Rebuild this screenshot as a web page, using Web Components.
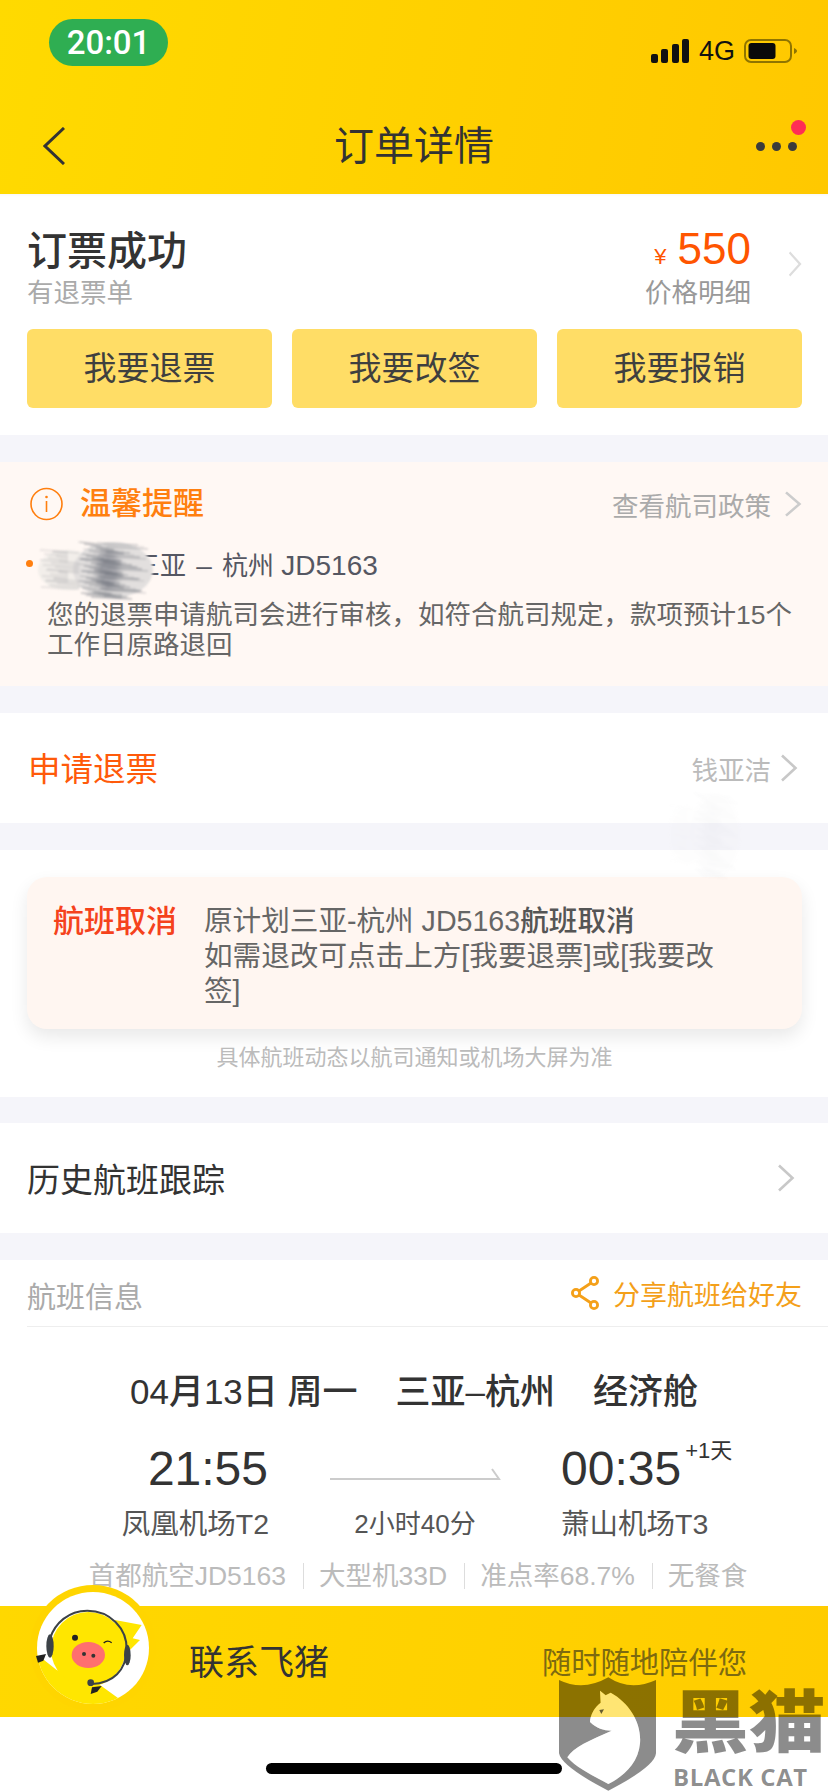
<!DOCTYPE html>
<html lang="zh-CN">
<head>
<meta charset="utf-8">
<title>订单详情</title>
<style>
  html, body { margin: 0; padding: 0; }
  body {
    position: relative;
    width: 828px;
    height: 1792px;
    overflow: hidden;
    background: #f5f5fa;
    font-family: "Liberation Sans", "Noto Sans CJK SC", sans-serif;
    color: #333;
  }
</style>
</head>
<body>
<app-header></app-header>
<order-summary></order-summary>
<tip-panel></tip-panel>
<action-row style="--label-color:#ff5a0a;--left:28px;--right:30px;--shift:4px;--label-size:32.5px;margin-top:27px">
  <span slot="label">申请退票</span>
  <span slot="value">钱亚洁</span>
</action-row>
<flight-status></flight-status>
<action-row style="margin-top:26px;--right:33px;--label-size:33px">
  <span slot="label">历史航班跟踪</span>
</action-row>
<flight-info></flight-info>
<contact-bar></contact-bar>
<ink-smudge style="left:38px;top:540px;width:120px;height:60px"></ink-smudge>
<ink-smudge style="left:668px;top:790px;width:76px;height:90px;opacity:.035"></ink-smudge>
<black-cat></black-cat>

<script>
function mount(el, html) {
  el.attachShadow({ mode: 'open' }).innerHTML = html;
}

class ChevronIcon extends HTMLElement {
  constructor() {
    super();
    mount(this, `
      <style>
        :host { display: block; width: var(--w, 18px); height: var(--h, 28px); color: var(--c, #ccc); }
        svg { display: block; width: 100%; height: 100%; }
      </style>
      <svg viewBox="0 0 18 28" preserveAspectRatio="none" fill="none">
        <path d="M2 1.5 L15.5 14 L2 26.5" stroke="currentColor" stroke-width="var(--sw, 2.6)"/>
      </svg>`);
  }
}

class AppHeader extends HTMLElement {
  constructor() {
    super();
    mount(this, `
      <style>
        :host { display: block; height: 194px; box-sizing: border-box; background: linear-gradient(100deg, #ffda00, #ffc800); }
        .status { display: flex; justify-content: space-between; align-items: flex-start; height: 66px; padding: 19px 31px 0 49px; box-sizing: border-box; }
        .pill { width: 119px; height: 47px; border-radius: 24px; background: #2fae52; color: #fff; font: 500 33px/47px Roboto, sans-serif; text-align: center; }
        .sys { display: flex; align-items: center; height: 24px; margin-top: 20px; gap: 10px; }
        .net { font-size: 27px; line-height: 24px; color: #111; margin-right: -1px; }
        .nav { display: grid; grid-template-columns: 1fr auto 1fr; align-items: center; height: 56px; margin-top: 52px; padding: 0 43px; }
        h1 { margin: 0; font-size: 40px; line-height: 56px; font-weight: 400; color: #333; }
        .dots { position: relative; justify-self: end; display: flex; gap: 7px; margin-right: -12px; }
        .dots i { width: 9px; height: 9px; border-radius: 50%; background: #3b3b3b; }
        .badge { position: absolute; right: -9px; top: -22px; width: 15px; height: 15px; border-radius: 50%; background: #ff2d55; }
      </style>
      <div class="status">
        <div class="pill">20:01</div>
        <div class="sys">
          <svg width="38" height="24" viewBox="0 0 38 24" fill="#111">
            <rect x="0" y="15" width="7" height="9" rx="2"/><rect x="10" y="10" width="7" height="14" rx="2"/>
            <rect x="21" y="5" width="7" height="19" rx="2"/><rect x="31" y="0" width="7" height="24" rx="2"/>
          </svg>
          <span class="net">4G</span>
          <svg width="53" height="24" viewBox="0 0 53 24">
            <rect x="1" y="1" width="46" height="22" rx="6" fill="none" stroke="#8f7400" stroke-width="2"/>
            <rect x="4.5" y="4" width="27" height="16" rx="3" fill="#0a0a0a"/>
            <path d="M50 9 C52 10 53 11 53 12 C53 13 52 14 50 15 Z" fill="#8f7400"/>
          </svg>
        </div>
      </div>
      <div class="nav">
        <svg width="22" height="38" viewBox="0 0 22 38" fill="none"><path d="M21 1 L2 19 L21 37" stroke="#333" stroke-width="3"/></svg>
        <h1>订单详情</h1>
        <div class="dots"><i></i><i></i><i></i><span class="badge"></span></div>
      </div>`);
  }
}

class OrderSummary extends HTMLElement {
  constructor() {
    super();
    mount(this, `
      <style>
        :host { display: block; background: #fff; padding: 37px 26px 27px 27px; height: 241px; box-sizing: border-box; box-shadow: inset 0 3px 3px -2px rgba(0,0,0,.04); }
        .top { display: flex; justify-content: space-between; height: 98px; }
        h2 { margin: 0; font-size: 40px; line-height: 40px; font-weight: 500; color: #333; }
        .sub { margin-top: 7px; font-size: 26.5px; line-height: 30px; color: #aaa; }
        .right { display: flex; gap: 37px; }
        .price { text-align: right; }
        .amount { margin-top: -2px; line-height: 40px; font-size: 44px; color: #ff5500; }
        .amount small { font-size: 22px; margin-right: 11px; }
        .label { margin-top: 1px; font-size: 26.5px; line-height: 30px; color: #999; }
        chevron-icon { margin-top: 20px; --w: 14px; --h: 26px; --c: #ddd; }
        .btns { display: grid; grid-template-columns: repeat(3, 1fr); gap: 20px; }
        .btns div { height: 79px; border-radius: 6px; background: #ffdd66; font-size: 33px; line-height: 79px; text-align: center; color: #3f3f3f; }
      </style>
      <div class="top">
        <div><h2>订票成功</h2><div class="sub">有退票单</div></div>
        <div class="right">
          <div class="price">
            <div class="amount"><small>¥</small>550</div>
            <div class="label">价格明细</div>
          </div>
          <chevron-icon></chevron-icon>
        </div>
      </div>
      <div class="btns"><div>我要退票</div><div>我要改签</div><div>我要报销</div></div>`);
  }
}

class TipPanel extends HTMLElement {
  constructor() {
    super();
    mount(this, `
      <style>
        :host { display: block; margin-top: 27px; height: 224px; box-sizing: border-box; padding: 24px 26px 0 30px; background: #fff8f4; }
        .head { display: flex; align-items: center; height: 36px; }
        .head svg { margin-right: 17px; }
        b { flex: 1; font-size: 31px; line-height: 38px; font-weight: 500; color: #ff7f0f; }
        .link { font-size: 26.5px; color: #aaa; margin-right: 13px; }
        chevron-icon { --w: 18px; --h: 26px; --c: #ccc; }
        .item { display: grid; grid-template-columns: 21px 1fr; margin: 29px 0 0 -4px; }
        .dot { width: 7px; height: 7px; margin-top: 9px; border-radius: 50%; background: #ff7f0f; }
        .route { padding-left: 87px; font-size: 26px; line-height: 30px; color: #555762; white-space: pre; }
        .route span { font-size: 28px; }
        .route .dash { margin: 0 3px; }
        .msg { grid-column: 2; margin-top: 19px; font-size: 26.5px; line-height: 30px; color: #666; width: 752px; }
      </style>
      <div class="head">
        <svg width="33" height="34" viewBox="0 0 33 34" fill="none">
          <circle cx="16.5" cy="17" r="15.5" stroke="#ff7f0f" stroke-width="1.6"/>
          <path d="M16.5 14 V25" stroke="#ff7f0f" stroke-width="1.6"/><circle cx="16.5" cy="10" r="1.3" fill="#ff7f0f"/>
        </svg>
        <b>温馨提醒</b>
        <span class="link">查看航司政策</span>
        <chevron-icon></chevron-icon>
      </div>
      <div class="item">
        <span class="dot"></span>
        <div class="route">三亚 <span class="dash">–</span> 杭州 <span>JD5163</span></div>
        <div class="msg">您的退票申请航司会进行审核，如符合航司规定，款项预计15个工作日原路退回</div>
      </div>`);
  }
}

class ActionRow extends HTMLElement {
  constructor() {
    super();
    mount(this, `
      <style>
        :host { display: flex; align-items: center; height: 110px; box-sizing: border-box; padding: 0 var(--right, 30px) 0 var(--left, 27px); background: #fff; }
        .label { flex: 1; padding-bottom: var(--shift, 0); font-size: var(--label-size, 33px); color: var(--label-color, #333); }
        .value { font-size: 26.5px; color: #bbb; margin-right: 9px; }
        chevron-icon { --w: 18px; --h: 28px; --c: #c8c8c8; }
      </style>
      <div class="label"><slot name="label"></slot></div>
      <div class="value"><slot name="value"></slot></div>
      <chevron-icon></chevron-icon>`);
  }
}

class FlightStatus extends HTMLElement {
  constructor() {
    super();
    mount(this, `
      <style>
        :host { display: block; margin-top: 27px; height: 247px; box-sizing: border-box; padding: 27px 26px 0 27px; background: #fff; }
        .card { display: flex; gap: 27px; height: 152px; box-sizing: border-box; padding: 27px 66px 0 26px; border-radius: 20px; background: #fff6f1; box-shadow: 0 8px 18px rgba(0,0,0,.09); }
        b { flex: none; font-size: 31px; line-height: 36px; font-weight: 500; color: #f5421c; }
        .body { font-size: 28.6px; line-height: 35px; color: #666; }
        .body strong { font-weight: 500; color: #555; }
        .note { margin-top: 14px; font-size: 22px; line-height: 30px; text-align: center; color: #bbb; }
      </style>
      <div class="card">
        <b>航班取消</b>
        <div class="body">原计划三亚-杭州 JD5163<strong>航班取消</strong><br>如需退改可点击上方[我要退票]或[我要改签]</div>
      </div>
      <div class="note">具体航班动态以航司通知或机场大屏为准</div>`);
  }
}

class FlightInfo extends HTMLElement {
  constructor() {
    super();
    mount(this, `
      <style>
        :host { display: block; margin-top: 27px; height: 346px; box-sizing: border-box; background: #fff; }
        .head { display: flex; align-items: center; justify-content: space-between; height: 67px; box-sizing: border-box; margin-left: 27px; padding-right: 26px; border-bottom: 1px solid #eee; }
        .head span { padding-top: 4px; font-size: 29px; color: #aaa; }
        .share { display: flex; align-items: center; gap: 14px; font-size: 27px; color: #f4a019; }
        .date { display: flex; justify-content: center; gap: 38px; margin-top: 43px; font-size: 35px; line-height: 44px; font-weight: 500; color: #333; white-space: pre; }
        .grid { display: grid; grid-template-columns: 269px 292px 1fr; margin-top: 27px; }
        .time { display: flex; font-size: 48px; line-height: 56px; color: #333; }
        .dep { justify-content: flex-end; text-align: right; }
        .time.dep { padding-right: 1px; }
        .plus { margin: -5px 0 0 4px; font-size: 22px; line-height: 30px; height: 30px; }
        .line { display: flex; justify-content: center; padding-top: 27px; }
        .port { margin-top: 9px; font-size: 28.5px; line-height: 36px; color: #555; }
        .dur { margin-top: 9px; font-size: 26px; line-height: 36px; color: #555; text-align: center; }
        .meta { display: flex; align-items: center; justify-content: center; margin-top: 18px; padding-left: 8px; font-size: 26.5px; line-height: 32px; color: #bbb; white-space: nowrap; }
        .meta i { width: 1px; height: 26px; margin: 0 15px 0 17px; background: #ddd; }
      </style>
      <div class="head">
        <span>航班信息</span>
        <div class="share">
          <svg width="28" height="34" viewBox="0 0 28 34" fill="none" stroke="#f4a019" stroke-width="2.8">
            <circle cx="23" cy="5" r="3.6"/><circle cx="5" cy="17" r="3.6"/><circle cx="23" cy="29" r="3.6"/>
            <path d="M20 7 L8 15 M8 19 L20 27"/>
          </svg>
          分享航班给好友
        </div>
      </div>
      <div class="date"><span>04月13日 周一</span><span>三亚–杭州</span><span>经济舱</span></div>
      <div class="grid">
        <div class="time dep">21:55</div>
        <div class="line">
          <svg width="171" height="14" viewBox="0 0 171 14" fill="none" stroke="#ccc" stroke-width="2"><path d="M0 11 H169 L162 1"/></svg>
        </div>
        <div class="time"><span>00:35</span><span class="plus">+1天</span></div>
        <div class="port dep">凤凰机场T2</div>
        <div class="dur">2小时40分</div>
        <div class="port">萧山机场T3</div>
      </div>
      <div class="meta">首都航空JD5163<i></i>大型机33D<i></i>准点率68.7%<i></i>无餐食</div>`);
  }
}

class ContactBar extends HTMLElement {
  constructor() {
    super();
    mount(this, `
      <style>
        :host { display: block; background: #fff; height: 186px; }
        .bar { position: relative; display: flex; align-items: center; justify-content: space-between; height: 111px; box-sizing: border-box; padding: 0 81px 4px 189px; background: linear-gradient(100deg, #ffd800, #ffcc00); }
        .name { font-size: 35px; color: #333; }
        .slogan { font-size: 29.3px; color: #7d6a10; }
        svg { position: absolute; left: 30px; top: -21px; }
        .home { width: 296px; height: 11px; margin: 46px auto 0; border-radius: 6px; background: #000; }
      </style>
      <div class="bar">
        <svg width="126" height="126" viewBox="90 45 378 378">
          <defs><clipPath id="inner"><circle cx="279" cy="234" r="168"/></clipPath></defs>
          <circle cx="279" cy="234" r="189" fill="#ffd500"/>
          <circle cx="279" cy="234" r="168" fill="#fff"/>
          <g clip-path="url(#inner)">
            <path d="M345 150 L425 165 L398 205 L420 210 L380 250 L340 220 Z" fill="#ffe600"/>
            <path d="M120 260 L170 300 L300 345 L355 385 L300 420 L170 420 L100 330 Z" fill="#ffe600"/>
            <circle cx="265" cy="238" r="112" fill="#ffe600"/>
          </g>
          <path d="M275 342 C340 340 378 300 380 240 C382 175 330 122 262 122 C205 122 165 160 150 205" fill="none" stroke="#3c4247" stroke-width="6"/>
          <ellipse cx="150" cy="228" rx="11" ry="35" fill="#3c4247"/>
          <ellipse cx="382" cy="255" rx="10" ry="31" fill="#3c4247"/>
          <circle cx="272" cy="338" r="10" fill="#3c4247"/>
          <path d="M276 352 L305 348 L292 365 L272 372 Z" fill="#222"/>
          <path d="M108 258 L138 252 L130 272 L114 278 Z" fill="#222"/>
          <circle cx="225" cy="203" r="9" fill="#222"/>
          <path d="M311 219 Q322 208 335 218" fill="none" stroke="#222" stroke-width="4"/>
          <ellipse cx="265" cy="255" rx="50" ry="39" fill="#ff6f6f"/>
          <circle cx="252" cy="252" r="6" fill="#333"/><circle cx="280" cy="257" r="6" fill="#333"/>
        </svg>
        <span class="name">联系飞猪</span>
        <span class="slogan">随时随地陪伴您</span>
      </div>
      <div class="home"></div>`);
  }
}

class InkSmudge extends HTMLElement {
  constructor() {
    super();
    let lines = '';
    // pencil hatching, the seed stays fixed so every run draws the same thing
    for (let i = 0; i < 70; i++) {
      const y = 2 + (i * 53 % 56);
      const a = 40 + (i * 37 % 30);
      const b = a + 18 + (i * 23 % 46);
      lines += `<path d="M${a} ${y} L${b} ${y + 2}" stroke="#6c7079" stroke-width="1.2" stroke-opacity="${0.25 + (i % 5) * 0.1}"/>`;
    }
    for (let i = 0; i < 24; i++) {
      const y = 10 + (i * 29 % 38);
      lines += `<path d="M${2 + (i * 13 % 20)} ${y} L${30 + (i * 11 % 22)} ${y + 2}" stroke="#a4a4a8" stroke-width="1.4" stroke-opacity=".3"/>`;
    }
    mount(this, `
      <style>
        :host { display: block; position: absolute; }
        svg { display: block; width: 100%; height: 100%; filter: blur(.9px); }
      </style>
      <svg viewBox="0 0 120 60" preserveAspectRatio="none">
        <ellipse cx="30" cy="30" rx="30" ry="20" fill="#f2eeea"/>
        <ellipse cx="75" cy="30" rx="40" ry="28" fill="#e2dfde"/>
        <ellipse cx="70" cy="30" rx="11" ry="20" fill="#a6a6ac" style="filter:blur(3px)"/>
        ${lines}
      </svg>`);
  }
}

class BlackCat extends HTMLElement {
  constructor() {
    super();
    mount(this, `
      <style>
        :host { display: block; position: absolute; left: 540px; top: 1660px; width: 288px; height: 132px; color: rgba(0,0,0,.45); }
        svg { position: absolute; left: 0; top: 0; }
        .zh { position: absolute; left: 132px; top: 24px; font: 900 68px/68px "Noto Sans CJK SC", sans-serif; white-space: nowrap; transform: scaleX(1.13); transform-origin: left top; }
        .en { position: absolute; left: 133px; top: 103px; font: 700 24px/28px "Open Sans", sans-serif; letter-spacing: .6px; white-space: nowrap; }
      </style>
      <svg width="288" height="132" viewBox="0 0 864 396">
        <path fill-rule="evenodd" fill="rgba(0,0,0,.45)" d="M57 60 Q130 95 205 52 Q270 95 348 60 L348 280 Q345 320 205 392 Q65 320 57 280 Z
          M180 92 L197 106 L212 98 C270 130 305 190 300 250 C295 310 250 350 205 372 C165 350 110 325 82 292 C100 262 150 240 215 212 C190 212 170 205 150 186 C150 165 165 140 182 128 Z"/>
        <path fill="rgba(255,255,255,.45)" d="M180 92 L197 106 L212 98 C270 130 305 190 300 250 C295 310 250 350 205 372 C165 350 110 325 82 292 C100 262 150 240 215 212 C190 212 170 205 150 186 C150 165 165 140 182 128 Z"/>
        <path fill="rgba(0,0,0,.6)" d="M178 150 L192 148 L184 162 Z"/>
      </svg>
      <span class="zh">黑猫</span>
      <span class="en">BLACK CAT</span>`);
  }
}

customElements.define('chevron-icon', ChevronIcon);
customElements.define('app-header', AppHeader);
customElements.define('order-summary', OrderSummary);
customElements.define('tip-panel', TipPanel);
customElements.define('action-row', ActionRow);
customElements.define('flight-status', FlightStatus);
customElements.define('flight-info', FlightInfo);
customElements.define('contact-bar', ContactBar);
customElements.define('ink-smudge', InkSmudge);
customElements.define('black-cat', BlackCat);
</script>
</body>
</html>
